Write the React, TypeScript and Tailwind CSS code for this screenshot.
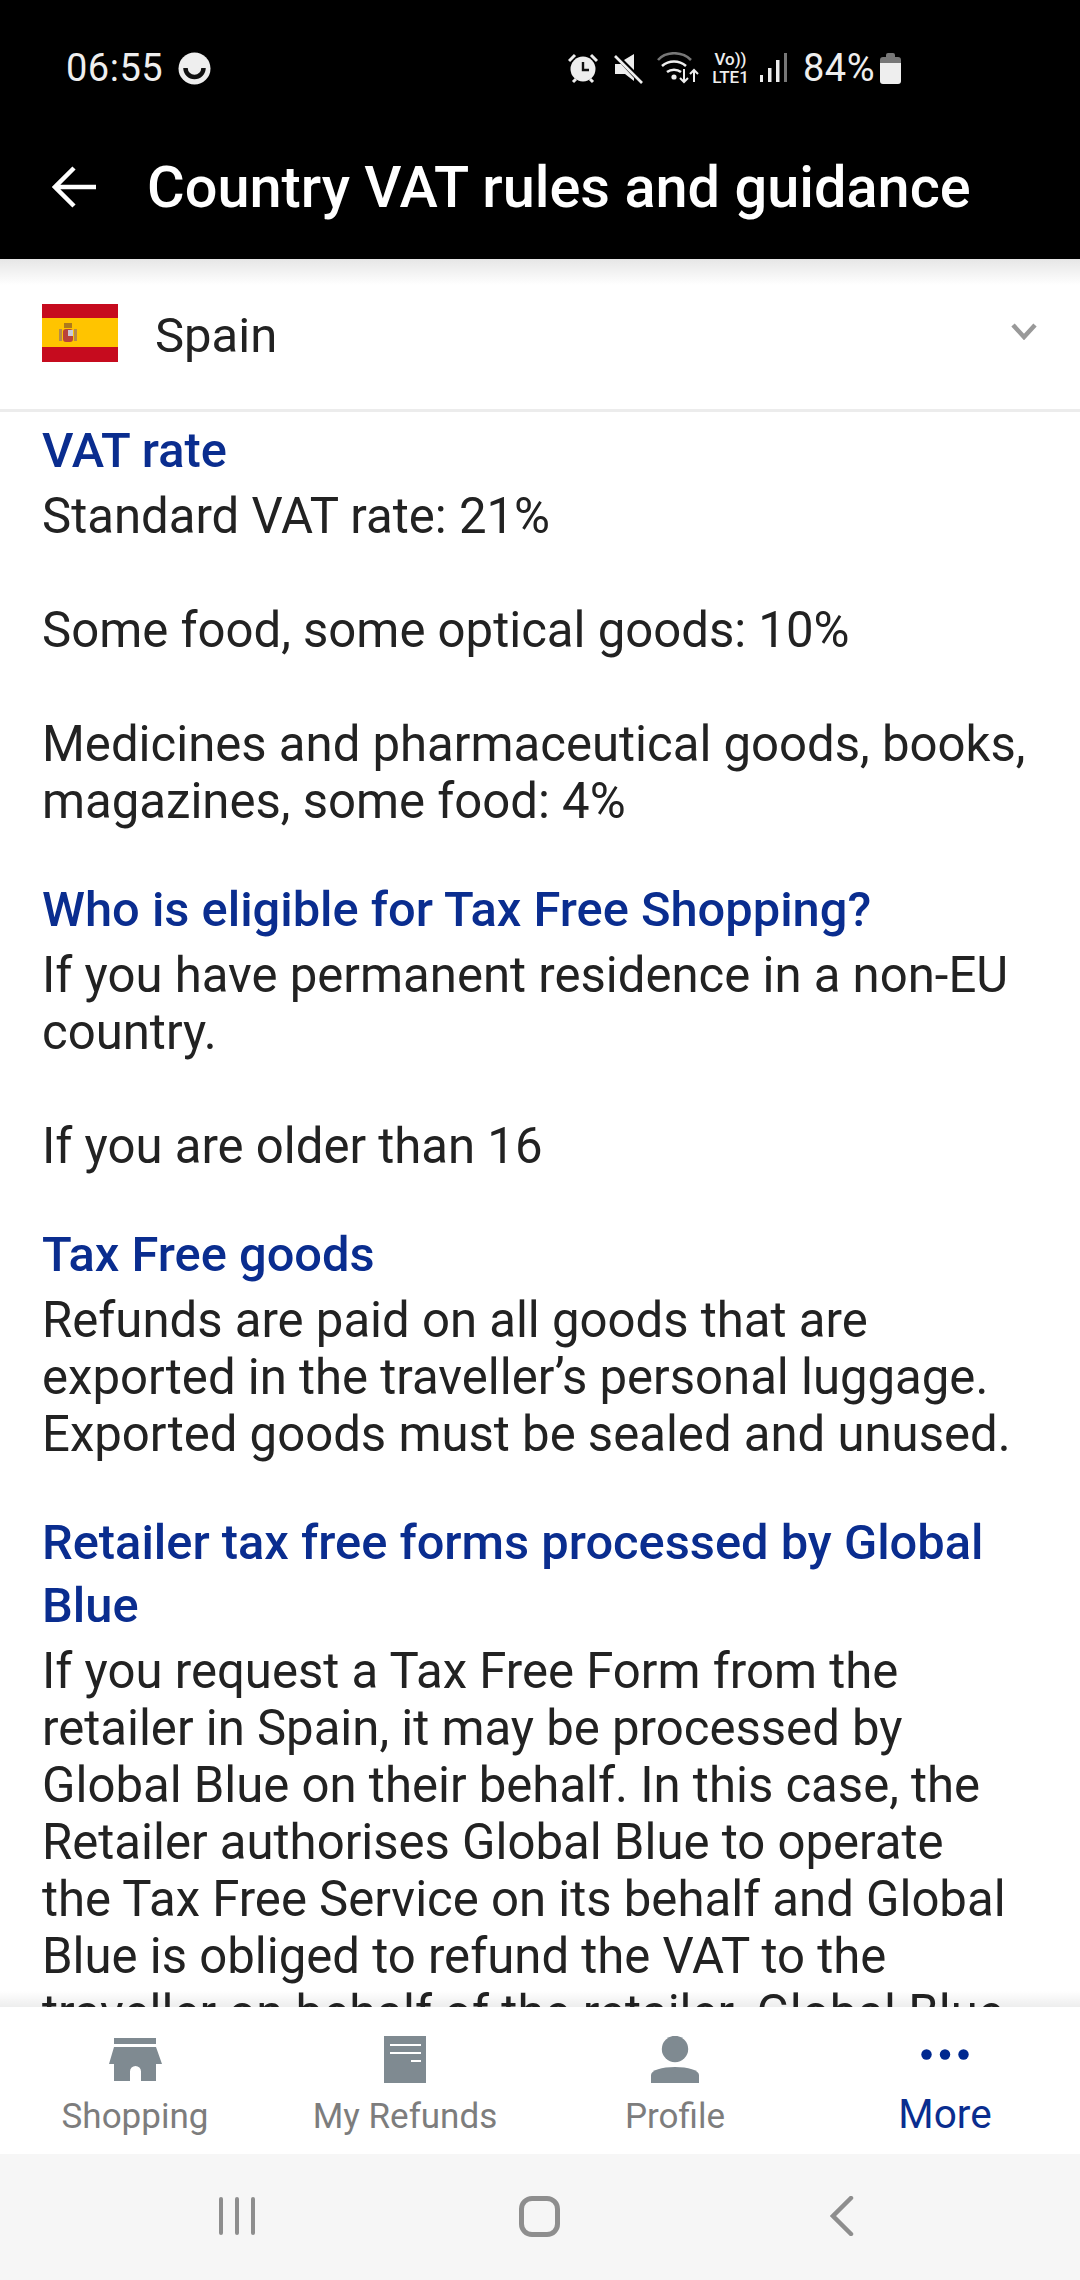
import React from "react";

const font = { fontFamily: "Roboto, sans-serif" };

const sections = [
  {
    title: "VAT rate",
    paras: [
      "Standard VAT rate: 21%",
      "Some food, some optical goods: 10%",
      "Medicines and pharmaceutical goods, books, magazines, some food: 4%",
    ],
  },
  {
    title: "Who is eligible for Tax Free Shopping?",
    paras: ["If you have permanent residence in a non-EU country.", "If you are older than 16"],
  },
  {
    title: "Tax Free goods",
    paras: [
      "Refunds are paid on all goods that are\nexported in the traveller’s personal luggage.\nExported goods must be sealed and unused.",
    ],
  },
  {
    title: "Retailer tax free forms processed by Global Blue",
    paras: [
      "If you request a Tax Free Form from the\nretailer in Spain, it may be processed by\nGlobal Blue on their behalf. In this case, the\nRetailer authorises Global Blue to operate\nthe Tax Free Service on its behalf and Global\nBlue is obliged to refund the VAT to the\ntraveller on behalf of the retailer. Global Blue\nwill then charge the retailer for this service.",
    ],
  },
];

const StatusIcons = () => (
  <div className="flex items-center">
    <svg width="30" height="31" viewBox="0 0 30 31" className="ml-[1px]">
      <circle cx="15" cy="16" r="12.5" fill="#eee" />
      <path d="M15 9v8h6" stroke="#111" strokeWidth="2.4" fill="none" />
      <path d="M1 8l6-6M29 8l-6-6" stroke="#eee" strokeWidth="3" />
      <path d="M5 29l3-3M25 29l-3-3" stroke="#eee" strokeWidth="3" />
    </svg>
    <svg width="31" height="31" viewBox="0 0 31 31" className="ml-[15px]">
      <path d="M21 1v16L11 7zM2 11h6l13 14v3l-9-7H2z" fill="#eee" />
      <path d="M2 3l27 27" stroke="#eee" strokeWidth="2.6" />
    </svg>
    <svg width="42" height="32" viewBox="0 0 42 32" className="ml-[13px]" fill="none">
      <path d="M1 8C9-1 25-1 34 8" stroke="#777" strokeWidth="2.6" />
      <path d="M5 14c7-6 17-6 24 0M10 20c4-3 10-3 14 0" stroke="#eee" strokeWidth="2.6" />
      <circle cx="17" cy="25" r="2.6" fill="#eee" />
      <path d="M27 17v13M23 26l4 4 4-4M37 30V18M33 22l4-4 4 4" stroke="#eee" strokeWidth="2" />
    </svg>
    <div className="ml-[12px] w-[39px] flex flex-col items-center text-[#eee] text-[17px] leading-[18px] font-medium">
      <span>Vo))</span>
      <span>LTE1</span>
    </div>
    <svg width="27" height="31" viewBox="0 0 27 31" className="ml-[10px]" fill="#eee">
      <rect x="0" y="22" width="3" height="7" />
      <rect x="8" y="15" width="3.5" height="14" />
      <rect x="16" y="7" width="3.5" height="22" />
      <rect x="24" y="0" width="3" height="29" fill="#777" />
    </svg>
    <span className="ml-[16px] text-[38px] leading-[40px] text-[#eee] w-[73px] tracking-[0.5px] whitespace-nowrap">84%</span>
    <svg width="21" height="32" viewBox="0 0 21 32" className="ml-[4px]">
      <path d="M6 3a2 2 0 012-2h5a2 2 0 012 2v2h3a3 3 0 013 3v3H0V8a3 3 0 013-3h3z" fill="#777" />
      <path d="M0 11h21v18a3 3 0 01-3 3H3a3 3 0 01-3-3z" fill="#eee" />
    </svg>
  </div>
);

const ShopIcon = () => (
  <svg width="53" height="43" viewBox="0 0 53 43" fill="#7f8a91">
    <rect x="5" y="0" width="42" height="6" />
    <path
      fillRule="evenodd"
      d="M5 9h42l6 17h-6v17H32V33.500a5.500 5.500 0 00-11 0V43H5V26H0z"
    />
  </svg>
);

const RefundIcon = () => (
  <svg width="42" height="47" viewBox="0 0 42 47" fill="#7f8a91">
    <path d="M0 0h42v47H0z" />
    <path d="M6 8h31v2H6zM6 16h31v2H6zM27 24h10v2H27z" fill="#fff" />
  </svg>
);

const ProfileIcon = () => (
  <svg width="48" height="47" viewBox="0 0 48 47" fill="#7f8a91">
    <circle cx="24" cy="13" r="13.200" />
    <path d="M0 47V39c0-5 11-8 24-8s24 3 24 8v8z" />
  </svg>
);

const MoreIcon = () => (
  <svg width="48" height="11" viewBox="0 0 48 11" fill="#00288f" className="mb-[11px]">
    <circle cx="5.500" cy="5.500" r="5.200" />
    <circle cx="24" cy="5.500" r="5.200" />
    <circle cx="42.500" cy="5.500" r="5.200" />
  </svg>
);

const NavItem = ({
  label,
  active,
  children,
}: {
  label: string;
  active?: boolean;
  children: React.ReactNode;
}) => (
  <div className="flex flex-col items-center">
    <div className="h-[47px] flex items-center justify-center">{children}</div>
    <span
      className={
        active
          ? "mt-[8px] text-[40.500px] leading-[46px] text-[#0a2d8f]"
          : "mt-[12px] text-[35px] leading-[44px] text-[#7d7d7d]"
      }
    >
      {label}
    </span>
  </div>
);

export default function App() {
  return (
    <div className="w-[1080px] h-[2280px] flex flex-col overflow-hidden bg-white" style={font}>
      <div className="bg-black h-[259px] shrink-0 pt-[52px]">
        <div className="flex items-center justify-between h-[32px] pl-[66px] pr-[179px]">
          <div className="flex items-center">
            <span className="text-[38px] leading-[40px] text-[#eee] tracking-[0.5px]">06:55</span>
            <svg width="33" height="33" viewBox="0 0 33 33" className="ml-[15px]" fill="none">
              <circle cx="16.500" cy="16.500" r="16" fill="#eee" />
              <path d="M7.500 16a9 9 0 0018 0" stroke="#111" strokeWidth="4.500" />
            </svg>
          </div>
          <StatusIcons />
        </div>
        <div className="flex items-center pl-[52px] mt-[70px]">
          <svg width="44" height="42" viewBox="0 0 44 42" fill="none" stroke="#fff" strokeWidth="4.500">
            <path d="M44 21H3M22 2L3 21l19 19" />
          </svg>
          <span className="ml-[51px] text-[57.700px] leading-[66px] font-medium text-white whitespace-nowrap">
            Country VAT rules and guidance
          </span>
        </div>
      </div>

      <div className="relative h-[153px] shrink-0 flex items-center pl-[42px] pr-[43px] border-b-[3px] border-[#ececec]">
        <div className="absolute top-0 left-0 right-0 h-[26px] bg-gradient-to-b from-[#e6e6e6] to-white" />
        <div className="relative w-[76px] h-[58px] flex flex-col mt-[-2px]">
          <div className="h-[14px] bg-[#c60b1e]" />
          <div className="h-[29px] bg-[#ffc400] pl-[16px] flex items-center">
            <svg width="20" height="22" viewBox="0 0 20 22">
              <rect x="6" y="1" width="8" height="5" fill="#ad7a1c" />
              <rect x="1" y="7" width="3" height="12" fill="#b5894a" />
              <rect x="16" y="7" width="3" height="12" fill="#b5894a" />
              <rect x="5" y="7" width="10" height="13" rx="3" fill="#b9433a" />
              <rect x="10" y="8" width="5" height="6" fill="#c9c9d6" />
            </svg>
          </div>
          <div className="h-[15px] bg-[#c60b1e]" />
        </div>
        <span className="relative ml-[37px] mt-[4px] text-[49px] leading-[56px] text-[#222]">Spain</span>
        <svg width="26" height="17" viewBox="0 0 26 17" className="relative ml-auto mt-[-5px]" fill="none" stroke="#999" strokeWidth="4.500">
          <path d="M2 2l11 12L24 2" />
        </svg>
      </div>

      <div className="relative flex-1 min-h-0 overflow-hidden pt-[7px] pl-[42px] pr-[20px]">
        {sections.map((section) => (
          <div key={section.title} className="mb-[48px]">
            <h2 className="text-[48.800px] leading-[63px] font-medium text-[#0a2d8f] mb-[6px] pr-[20px]">{section.title}</h2>
            {section.paras.map((p, i) => (
              <p
                key={i}
                className={
                  i > 0
                    ? "mt-[57px] text-[49.100px] leading-[57px] text-[#222] whitespace-pre-line"
                    : "text-[49.100px] leading-[57px] text-[#222] whitespace-pre-line"
                }
              >
                {p}
              </p>
            ))}
          </div>
        ))}
        <div className="absolute bottom-0 left-0 right-0 h-[16px] bg-gradient-to-b from-transparent to-[#00000012]" />
      </div>

      <div className="h-[147px] shrink-0 bg-white grid grid-cols-4 pt-[29px]">
        <NavItem label="Shopping">
          <ShopIcon />
        </NavItem>
        <NavItem label="My Refunds">
          <RefundIcon />
        </NavItem>
        <NavItem label="Profile">
          <ProfileIcon />
        </NavItem>
        <NavItem label="More" active>
          <MoreIcon />
        </NavItem>
      </div>

      <div className="h-[126px] shrink-0 bg-[#f6f6f6] grid grid-cols-3 items-center pb-[2px]">
        <div className="flex justify-end pr-[105px]">
          <div className="flex gap-[12px]">
            <div className="w-[4px] h-[38px] bg-[#8e8e8e] rounded-sm" />
            <div className="w-[4px] h-[38px] bg-[#8e8e8e] rounded-sm" />
            <div className="w-[4px] h-[38px] bg-[#8e8e8e] rounded-sm" />
          </div>
        </div>
        <div className="flex justify-center pr-[2px]">
          <div className="w-[41px] h-[41px] rounded-[13px] border-[5px] border-[#8e8e8e]" />
        </div>
        <div className="flex pl-[110px]">
          <svg width="24" height="40" viewBox="0 0 24 40" fill="none" stroke="#8e8e8e" strokeWidth="4.500" strokeLinecap="round">
            <path d="M21 2L3 20l18 18" />
          </svg>
        </div>
      </div>
    </div>
  );
}
